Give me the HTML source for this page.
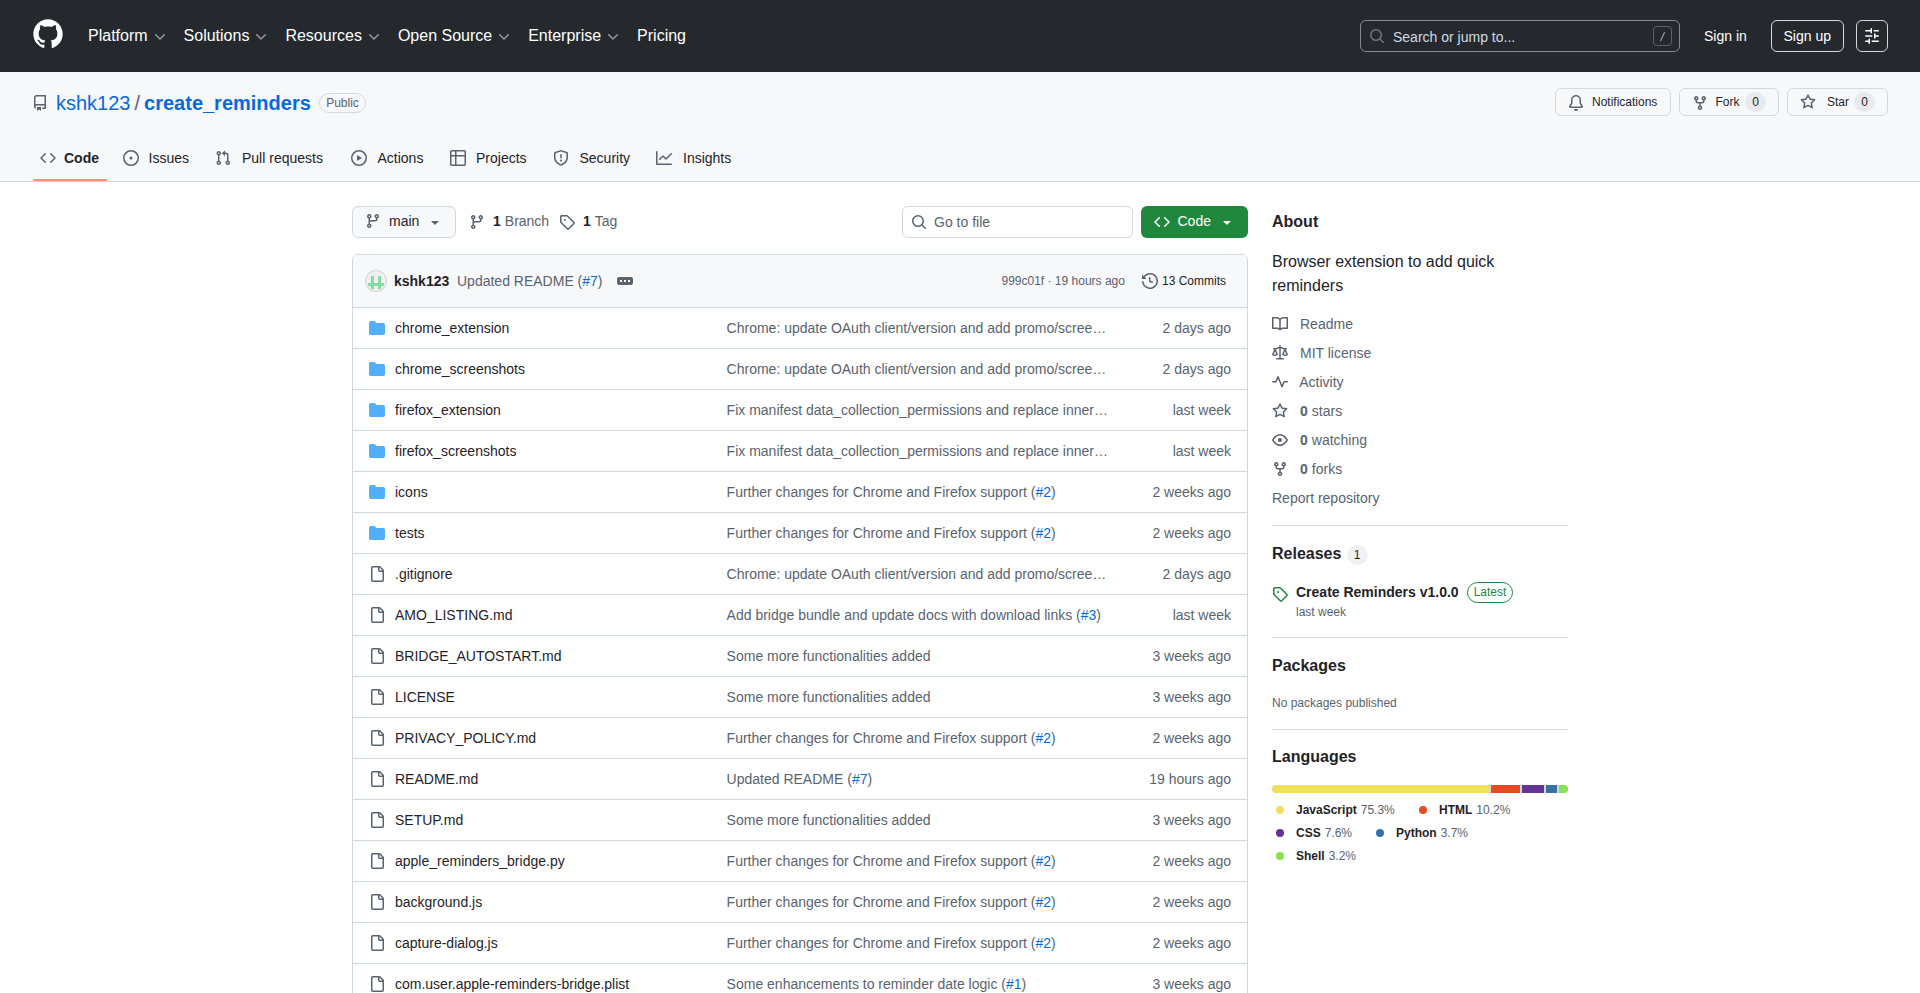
<!DOCTYPE html><html><head><meta charset="utf-8"><title>GitHub</title><style>
*{box-sizing:border-box;margin:0;padding:0}
html,body{width:1920px;height:993px;overflow:hidden;background:#fff}
body{font-family:"Liberation Sans",sans-serif;color:#1f2328;font-size:14px;line-height:1.5;position:relative}
svg{display:block;fill:currentColor;flex-shrink:0}
.a{position:absolute;white-space:nowrap}
.hdr{position:absolute;left:0;top:0;width:1920px;height:72px;background:#25292e}
.gn{position:absolute;left:88px;top:20px;height:32px;display:flex;align-items:center;color:#fff;font-size:16px;white-space:nowrap}
.gn .it{display:flex;align-items:center;margin-right:16px}
.gn .it svg{margin-left:4px;color:#9198a1;position:relative;top:1px}
.srch{position:absolute;left:1360px;top:20px;width:320px;height:32px;border:1px solid #818b98;border-radius:6px;color:#9198a1}
.btnd{position:absolute;top:20px;height:32px;border:1px solid #d1d9e0;border-radius:6px;color:#fff}
.rh{position:absolute;left:0;top:72px;width:1920px;height:110px;background:#f6f8fa;border-bottom:1px solid #d1d9e0}
.btn{position:absolute;height:28px;border:1px solid #d1d9e0;border-radius:6px;background:#f6f8fa;font-size:12px;color:#1f2328;white-space:nowrap}
.cnt{position:absolute;height:20px;line-height:20px;border-radius:2em;background:#818b981f;text-align:center;font-size:12px;color:#1f2328}
.ti{position:absolute;top:150px;color:#59636e}
.tt{position:absolute;top:148px;line-height:20px;color:#1f2328;white-space:nowrap}
.row{position:absolute;left:353px;width:894px;height:41px;border-top:1px solid #d1d9e0;white-space:nowrap}
.row .ic{position:absolute;left:16px;top:12px}
.row .nm{position:absolute;left:42px;top:10px;color:#1f2328}
.row .msg{position:absolute;left:373.6px;top:10px;color:#59636e}
.row .dt{position:absolute;right:16px;top:10px;color:#59636e;text-align:right}
.blue{color:#0969da}
.sb{position:absolute;left:1272px;width:296px}
.li{position:absolute;left:1272px;height:20px;display:flex;align-items:center;color:#59636e;white-space:nowrap}
.li svg{margin-right:12px}
.sep{position:absolute;left:1272px;width:296px;height:1px;background:#d1d9e0}
.h2{position:absolute;left:1272px;font-size:16px;font-weight:700;color:#1f2328;white-space:nowrap}
.lg{position:absolute;display:flex;align-items:center;font-size:12px;color:#59636e;white-space:nowrap}
.lg b{color:#1f2328;margin-right:4px}
.lg i{display:inline-block;width:8px;height:8px;border-radius:50%;margin-right:12px}
</style></head><body>
<div class="hdr">
<svg class="" style="position:absolute;left:32px;top:18px;color:#fff" width="32" height="32" viewBox="0 0 24 24"><path d="M12 1C5.923 1 1 5.923 1 12c0 4.867 3.149 8.979 7.521 10.436.55.096.756-.233.756-.522 0-.262-.013-1.128-.013-2.049-2.764.509-3.479-.674-3.699-1.292-.124-.317-.66-1.293-1.127-1.554-.385-.207-.936-.715-.014-.729.866-.014 1.485.797 1.691 1.128.99 1.663 2.571 1.196 3.204.907.096-.715.385-1.196.701-1.471-2.448-.275-5.005-1.224-5.005-5.432 0-1.196.426-2.186 1.128-2.956-.111-.275-.496-1.402.11-2.915 0 0 .921-.288 3.024 1.128.88-.248 1.816-.371 2.749-.371.934 0 1.871.123 2.75.371 2.104-1.428 3.025-1.128 3.025-1.128.605 1.513.221 2.64.111 2.915.701.77 1.127 1.747 1.127 2.956 0 4.222-2.571 5.157-5.019 5.432.399.344.743 1.004.743 2.035 0 1.471-.014 2.654-.014 3.025 0 .289.206.632.756.522C19.851 20.979 23 16.854 23 12c0-6.077-4.922-11-11-11Z"/></svg>
<div class="gn">
<div class="it">Platform<svg class="" style="" width="16" height="16" viewBox="0 0 16 16"><path d="M12.78 5.22a.749.749 0 0 1 0 1.06l-4.25 4.25a.749.749 0 0 1-1.06 0L3.22 6.28a.749.749 0 0 1 .215-1.215.749.749 0 0 1 .845.155L8 8.94l3.72-3.72a.749.749 0 0 1 1.06 0Z"/></svg></div>
<div class="it">Solutions<svg class="" style="" width="16" height="16" viewBox="0 0 16 16"><path d="M12.78 5.22a.749.749 0 0 1 0 1.06l-4.25 4.25a.749.749 0 0 1-1.06 0L3.22 6.28a.749.749 0 0 1 .215-1.215.749.749 0 0 1 .845.155L8 8.94l3.72-3.72a.749.749 0 0 1 1.06 0Z"/></svg></div>
<div class="it">Resources<svg class="" style="" width="16" height="16" viewBox="0 0 16 16"><path d="M12.78 5.22a.749.749 0 0 1 0 1.06l-4.25 4.25a.749.749 0 0 1-1.06 0L3.22 6.28a.749.749 0 0 1 .215-1.215.749.749 0 0 1 .845.155L8 8.94l3.72-3.72a.749.749 0 0 1 1.06 0Z"/></svg></div>
<div class="it">Open Source<svg class="" style="" width="16" height="16" viewBox="0 0 16 16"><path d="M12.78 5.22a.749.749 0 0 1 0 1.06l-4.25 4.25a.749.749 0 0 1-1.06 0L3.22 6.28a.749.749 0 0 1 .215-1.215.749.749 0 0 1 .845.155L8 8.94l3.72-3.72a.749.749 0 0 1 1.06 0Z"/></svg></div>
<div class="it">Enterprise<svg class="" style="" width="16" height="16" viewBox="0 0 16 16"><path d="M12.78 5.22a.749.749 0 0 1 0 1.06l-4.25 4.25a.749.749 0 0 1-1.06 0L3.22 6.28a.749.749 0 0 1 .215-1.215.749.749 0 0 1 .845.155L8 8.94l3.72-3.72a.749.749 0 0 1 1.06 0Z"/></svg></div>
<div class="it">Pricing</div>
</div>
<div class="srch"><svg class="" style="position:absolute;left:8px;top:7px;color:#6e7781" width="16" height="16" viewBox="0 0 16 16"><path d="M10.68 11.74a6 6 0 0 1-7.922-8.982 6 6 0 0 1 8.982 7.922l3.04 3.04a.749.749 0 0 1-.326 1.275.749.749 0 0 1-.734-.215ZM11.5 7a4.499 4.499 0 1 0-8.997 0A4.499 4.499 0 0 0 11.5 7Z"/></svg><span class="a" style="left:32px;top:6px;font-size:14px;line-height:20px;color:#d1d9e0">Search or jump to...</span><span class="a" style="left:292px;top:5px;width:19px;height:20px;border:1px solid #5c6167;border-radius:4px"></span><svg class="a" style="left:0;top:0" width="320" height="32"><line x1="299.6" y1="19.8" x2="303.4" y2="11.6" stroke="#9da3ab" stroke-width="1.1" stroke-linecap="round"/></svg></div>
<span class="a" style="left:1704px;top:26px;font-size:14px;line-height:20px;color:#fff">Sign in</span>
<div class="btnd" style="left:1771px;width:73px"><span class="a" style="left:11.5px;top:5px;font-size:14px;line-height:20px">Sign up</span></div>
<div class="btnd" style="left:1856px;width:32px"><svg class="" style="position:absolute;left:7px;top:7px" width="16" height="16" viewBox="0 0 16 16"><path d="M15 2.75a.75.75 0 0 1-.75.75h-4a.75.75 0 0 1 0-1.5h4a.75.75 0 0 1 .75.75Zm-8.5.75v1.25a.75.75 0 0 0 1.5 0v-4a.75.75 0 0 0-1.5 0V2H1.75a.75.75 0 0 0 0 1.5H6.5Zm1.25 5.25a.75.75 0 0 0 0-1.5h-6a.75.75 0 0 0 0 1.5h6ZM15 8a.75.75 0 0 1-.75.75H11.5V10a.75.75 0 1 1-1.5 0V6a.75.75 0 0 1 1.5 0v1.25h2.75A.75.75 0 0 1 15 8Zm-9 5.25v-2a.75.75 0 0 0-1.5 0v1.25H1.75a.75.75 0 0 0 0 1.5H4.5v1.25a.75.75 0 0 0 1.5 0v-2Zm9 0a.75.75 0 0 1-.75.75h-6a.75.75 0 0 1 0-1.5h6a.75.75 0 0 1 .75.75Z"/></svg></div>
</div>
<div class="rh"></div>
<svg class="" style="position:absolute;left:32px;top:95px;color:#59636e" width="16" height="16" viewBox="0 0 16 16"><path d="M2 2.5A2.5 2.5 0 0 1 4.5 0h8.75a.75.75 0 0 1 .75.75v12.5a.75.75 0 0 1-.75.75h-2.5a.75.75 0 0 1 0-1.5h1.75v-2h-8a1 1 0 0 0-.714 1.7.75.75 0 1 1-1.072 1.05A2.495 2.495 0 0 1 2 11.5Zm10.5-1h-8a1 1 0 0 0-1 1v6.708A2.486 2.486 0 0 1 4.5 9h8ZM5 12.25a.25.25 0 0 1 .25-.25h3.5a.25.25 0 0 1 .25.25v3.25a.25.25 0 0 1-.4.2l-1.45-1.087a.249.249 0 0 0-.3 0L5.4 15.7a.25.25 0 0 1-.4-.2Z"/></svg>
<span class="a" style="left:56px;top:91px;font-size:20px;line-height:24px"><span class="blue">kshk123</span><span style="color:#59636e;margin:0 4px">/</span><b class="blue">create_reminders</b></span>
<span class="a" style="left:319px;top:93px;width:47px;height:20px;border:1px solid #d1d9e0;border-radius:2em;font-size:12px;line-height:18px;color:#59636e;text-align:center">Public</span>
<div class="btn" style="left:1555px;top:88px;width:116px"></div><svg class="" style="position:absolute;left:1568px;top:95px;color:#59636e" width="16" height="16" viewBox="0 0 16 16"><path d="M8 16a2 2 0 0 0 1.985-1.75c.017-.137-.097-.25-.235-.25h-3.5c-.138 0-.252.113-.235.25A2 2 0 0 0 8 16ZM3 5a5 5 0 0 1 10 0v2.947c0 .05.015.098.042.139l1.703 2.555A1.519 1.519 0 0 1 13.482 13H2.518a1.516 1.516 0 0 1-1.263-2.36l1.703-2.554A.255.255 0 0 0 3 7.947Zm5-3.5A3.5 3.5 0 0 0 4.5 5v2.947c0 .346-.102.683-.294.97l-1.703 2.556a.017.017 0 0 0-.003.01l.001.006c0 .002.002.004.004.006l.006.004.007.001h10.964l.007-.001.006-.004.004-.006.001-.007a.017.017 0 0 0-.003-.01l-1.703-2.554a1.745 1.745 0 0 1-.294-.97V5A3.5 3.5 0 0 0 8 1.5Z"/></svg><span class="a" style="left:1592px;top:93px;font-size:12px;line-height:18px">Notifications</span>
<div class="btn" style="left:1679px;top:88px;width:100px"></div><svg class="" style="position:absolute;left:1692px;top:95px;color:#59636e" width="16" height="16" viewBox="0 0 16 16"><path d="M5 5.372v.878c0 .414.336.75.75.75h4.5a.75.75 0 0 0 .75-.75v-.878a2.25 2.25 0 1 1 1.5 0v.878a2.25 2.25 0 0 1-2.25 2.25h-1.5v2.128a2.251 2.251 0 1 1-1.5 0V8.5h-1.5A2.25 2.25 0 0 1 3.5 6.25v-.878a2.25 2.25 0 1 1 1.5 0ZM5 3.25a.75.75 0 1 0-1.5 0 .75.75 0 0 0 1.5 0Zm6.75.75a.75.75 0 1 0 0-1.5.75.75 0 0 0 0 1.5Zm-3 8.75a.75.75 0 1 0-1.5 0 .75.75 0 0 0 1.5 0Z"/></svg><span class="a" style="left:1715.5px;top:93px;font-size:12px;line-height:18px">Fork</span><span class="cnt" style="left:1745px;top:92px;width:21px">0</span>
<div class="btn" style="left:1787px;top:88px;width:101px"></div><svg class="" style="position:absolute;left:1800px;top:93.5px;color:#59636e" width="16" height="16" viewBox="0 0 16 16"><path d="M8 .25a.75.75 0 0 1 .673.418l1.882 3.815 4.21.612a.75.75 0 0 1 .416 1.279l-3.046 2.97.719 4.192a.751.751 0 0 1-1.088.791L8 12.347l-3.766 1.98a.75.75 0 0 1-1.088-.79l.72-4.194L.818 6.374a.75.75 0 0 1 .416-1.28l4.21-.611L7.327.668A.75.75 0 0 1 8 .25Zm0 2.445L6.615 5.5a.75.75 0 0 1-.564.41l-3.097.45 2.24 2.184a.75.75 0 0 1 .216.664l-.528 3.084 2.769-1.456a.75.75 0 0 1 .698 0l2.77 1.456-.53-3.084a.75.75 0 0 1 .216-.664l2.24-2.183-3.096-.45a.75.75 0 0 1-.564-.41L8 2.694Z"/></svg><span class="a" style="left:1827px;top:93px;font-size:12px;line-height:18px">Star</span><span class="cnt" style="left:1854px;top:92px;width:21px">0</span>
<svg class="ti" style="left:40px" width="16" height="16" viewBox="0 0 16 16"><path d="m11.28 3.22 4.25 4.25a.75.75 0 0 1 0 1.06l-4.25 4.25a.749.749 0 0 1-1.275-.326.749.749 0 0 1 .215-.734L13.94 8l-3.72-3.72a.749.749 0 0 1 .326-1.275.749.749 0 0 1 .734.215Zm-6.56 0a.751.751 0 0 1 1.042.018.751.751 0 0 1 .018 1.042L2.06 8l3.72 3.72a.749.749 0 0 1-.326 1.275.749.749 0 0 1-.734-.215L.47 8.53a.75.75 0 0 1 0-1.06Z"/></svg>
<span class="tt" style="left:64px"><b>Code</b></span>
<svg class="ti" style="left:123px" width="16" height="16" viewBox="0 0 16 16"><path d="M8 9.5a1.5 1.5 0 1 0 0-3 1.5 1.5 0 0 0 0 3ZM8 0a8 8 0 1 1 0 16A8 8 0 0 1 8 0ZM1.5 8a6.5 6.5 0 1 0 13 0 6.5 6.5 0 0 0-13 0Z"/></svg>
<span class="tt" style="left:148.5px">Issues</span>
<svg class="ti" style="left:215px" width="16" height="16" viewBox="0 0 16 16"><path d="M1.5 3.25a2.25 2.25 0 1 1 3 2.122v5.256a2.251 2.251 0 1 1-1.5 0V5.372A2.25 2.25 0 0 1 1.5 3.25Zm5.677-.177L9.573.677A.25.25 0 0 1 10 .854V2.5h1A2.5 2.5 0 0 1 13.5 5v5.628a2.251 2.251 0 1 1-1.5 0V5a1 1 0 0 0-1-1h-1v1.646a.25.25 0 0 1-.427.177L7.177 3.427a.25.25 0 0 1 0-.354ZM3.75 2.5a.75.75 0 1 0 0 1.5.75.75 0 0 0 0-1.5Zm0 9.5a.75.75 0 1 0 0 1.5.75.75 0 0 0 0-1.5Zm8.25.75a.75.75 0 1 0 1.5 0 .75.75 0 0 0-1.5 0Z"/></svg>
<span class="tt" style="left:242px">Pull requests</span>
<svg class="ti" style="left:351px" width="16" height="16" viewBox="0 0 16 16"><path d="M8 0a8 8 0 1 1 0 16A8 8 0 0 1 8 0ZM1.5 8a6.5 6.5 0 1 0 13 0 6.5 6.5 0 0 0-13 0Zm4.879-2.773 4.264 2.559a.25.25 0 0 1 0 .428l-4.264 2.559A.25.25 0 0 1 6 10.559V5.442a.25.25 0 0 1 .379-.215Z"/></svg>
<span class="tt" style="left:377.5px">Actions</span>
<svg class="ti" style="left:450px" width="16" height="16" viewBox="0 0 16 16"><path d="M0 1.75C0 .784.784 0 1.75 0h12.5C15.216 0 16 .784 16 1.75v12.5A1.75 1.75 0 0 1 14.25 16H1.75A1.75 1.75 0 0 1 0 14.25ZM6.5 6.5v8h7.75a.25.25 0 0 0 .25-.25V6.5Zm8-1.5V1.75a.25.25 0 0 0-.25-.25H6.5V5Zm-13 1.5v7.75c0 .138.112.25.25.25H5v-8ZM5 5V1.5H1.75a.25.25 0 0 0-.25.25V5Z"/></svg>
<span class="tt" style="left:476px">Projects</span>
<svg class="ti" style="left:553px" width="16" height="16" viewBox="0 0 16 16"><path d="M7.467.133a1.748 1.748 0 0 1 1.066 0l5.25 1.68A1.75 1.75 0 0 1 15 3.48V7c0 1.566-.32 3.182-1.303 4.682-.983 1.498-2.585 2.813-5.032 3.855a1.697 1.697 0 0 1-1.33 0c-2.447-1.042-4.049-2.357-5.032-3.855C1.32 10.182 1 8.566 1 7V3.48a1.755 1.755 0 0 1 1.217-1.667Zm.61 1.429a.25.25 0 0 0-.153 0l-5.25 1.68a.25.25 0 0 0-.174.238V7c0 1.358.275 2.666 1.057 3.86.784 1.194 2.121 2.34 4.366 3.297a.196.196 0 0 0 .154 0c2.245-.956 3.582-2.104 4.366-3.298C13.225 9.666 13.5 8.36 13.5 7V3.48a.251.251 0 0 0-.174-.237l-5.25-1.68ZM8.75 4.75v3a.75.75 0 0 1-1.5 0v-3a.75.75 0 0 1 1.5 0ZM9 10.5a1 1 0 1 1-2 0 1 1 0 0 1 2 0Z"/></svg>
<span class="tt" style="left:579.5px">Security</span>
<svg class="ti" style="left:656px" width="16" height="16" viewBox="0 0 16 16"><path d="M1.5 1.75V13.5h13.75a.75.75 0 0 1 0 1.5H.75a.75.75 0 0 1-.75-.75V1.75a.75.75 0 0 1 1.5 0Zm14.28 2.53-5.25 5.25a.75.75 0 0 1-1.06 0L7 7.06 4.28 9.78a.751.751 0 0 1-1.042-.018.751.751 0 0 1-.018-1.042l3.25-3.25a.75.75 0 0 1 1.06 0L10 7.940l4.72-4.72a.751.751 0 0 1 1.042.018.751.751 0 0 1 .018 1.042Z"/></svg>
<span class="tt" style="left:683px">Insights</span>
<div class="a" style="left:33px;top:179px;width:74px;height:2px;background:#fd8c73;border-radius:6px"></div>
<div class="btn" style="left:352px;top:206px;width:104px;height:32px"></div><svg class="" style="position:absolute;left:365px;top:213.2px;color:#59636e" width="16" height="16" viewBox="0 0 16 16"><path d="M9.5 3.25a2.25 2.25 0 1 1 3 2.122V6A2.5 2.5 0 0 1 10 8.5H6a1 1 0 0 0-1 1v1.128a2.251 2.251 0 1 1-1.5 0V5.372a2.25 2.25 0 1 1 1.5 0v1.836A2.493 2.493 0 0 1 6 7h4a1 1 0 0 0 1-1v-.628A2.25 2.25 0 0 1 9.5 3.25Zm-6 0a.75.75 0 1 0 1.5 0 .75.75 0 0 0-1.5 0Zm8.25-.75a.75.75 0 1 0 0 1.5.75.75 0 0 0 0-1.5ZM4.25 12a.75.75 0 1 0 0 1.5.75.75 0 0 0 0-1.5Z"/></svg><span class="a" style="left:389px;top:211px;line-height:20px;font-size:14px">main</span><svg class="" style="position:absolute;left:427px;top:214px;color:#59636e" width="16" height="16" viewBox="0 0 16 16"><path d="m4.427 7.427 3.396 3.396a.25.25 0 0 0 .354 0l3.396-3.396A.25.25 0 0 0 11.396 7H4.604a.25.25 0 0 0-.177.427Z"/></svg>
<div class="a" style="left:469px;top:205px;height:32px;display:flex;align-items:center;color:#59636e"><svg class="" style="margin-right:8px;position:relative;top:0.8px" width="16" height="16" viewBox="0 0 16 16"><path d="M9.5 3.25a2.25 2.25 0 1 1 3 2.122V6A2.5 2.5 0 0 1 10 8.5H6a1 1 0 0 0-1 1v1.128a2.251 2.251 0 1 1-1.5 0V5.372a2.25 2.25 0 1 1 1.5 0v1.836A2.493 2.493 0 0 1 6 7h4a1 1 0 0 0 1-1v-.628A2.25 2.25 0 0 1 9.5 3.25Zm-6 0a.75.75 0 1 0 1.5 0 .75.75 0 0 0-1.5 0Zm8.25-.75a.75.75 0 1 0 0 1.5.75.75 0 0 0 0-1.5ZM4.25 12a.75.75 0 1 0 0 1.5.75.75 0 0 0 0-1.5Z"/></svg><b style="color:#1f2328;margin-right:4px">1</b>Branch</div>
<div class="a" style="left:559px;top:205px;height:32px;display:flex;align-items:center;color:#59636e"><svg class="" style="margin-right:8px;position:relative;top:1px" width="16" height="16" viewBox="0 0 16 16"><path d="M1 7.775V2.75C1 1.784 1.784 1 2.75 1h5.025c.464 0 .91.184 1.238.513l6.25 6.25a1.75 1.75 0 0 1 0 2.474l-5.026 5.026a1.75 1.75 0 0 1-2.474 0l-6.25-6.25A1.752 1.752 0 0 1 1 7.775Zm1.5 0c0 .066.026.13.073.177l6.25 6.25a.25.25 0 0 0 .354 0l5.025-5.025a.25.25 0 0 0 0-.354l-6.25-6.25a.25.25 0 0 0-.177-.073H2.75a.25.25 0 0 0-.25.25ZM6 5a1 1 0 1 1 0 2 1 1 0 0 1 0-2Z"/></svg><b style="color:#1f2328;margin-right:4px">1</b>Tag</div>
<div class="a" style="left:902px;top:206px;width:231px;height:32px;border:1px solid #d1d9e0;border-radius:6px;background:#fff"><svg class="" style="position:absolute;left:8px;top:7px;color:#59636e" width="16" height="16" viewBox="0 0 16 16"><path d="M10.68 11.74a6 6 0 0 1-7.922-8.982 6 6 0 0 1 8.982 7.922l3.04 3.04a.749.749 0 0 1-.326 1.275.749.749 0 0 1-.734-.215ZM11.5 7a4.499 4.499 0 1 0-8.997 0A4.499 4.499 0 0 0 11.5 7Z"/></svg><span class="a" style="left:31px;top:5px;line-height:20px;color:#59636e">Go to file</span></div>
<div class="a" style="left:1141px;top:206px;width:107px;height:32px;border-radius:6px;background:#1f883d;color:#fff"><svg class="" style="position:absolute;left:13px;top:8px" width="16" height="16" viewBox="0 0 16 16"><path d="m11.28 3.22 4.25 4.25a.75.75 0 0 1 0 1.06l-4.25 4.25a.749.749 0 0 1-1.275-.326.749.749 0 0 1 .215-.734L13.94 8l-3.72-3.72a.749.749 0 0 1 .326-1.275.749.749 0 0 1 .734.215Zm-6.56 0a.751.751 0 0 1 1.042.018.751.751 0 0 1 .018 1.042L2.06 8l3.72 3.72a.749.749 0 0 1-.326 1.275.749.749 0 0 1-.734-.215L.47 8.53a.75.75 0 0 1 0-1.06Z"/></svg><span class="a" style="left:36.5px;top:5px;line-height:20px">Code</span><svg class="" style="position:absolute;left:78px;top:8px" width="16" height="16" viewBox="0 0 16 16"><path d="m4.427 7.427 3.396 3.396a.25.25 0 0 0 .354 0l3.396-3.396A.25.25 0 0 0 11.396 7H4.604a.25.25 0 0 0-.177.427Z"/></svg></div>
<div class="a" style="left:352px;top:254px;width:896px;height:800px;border:1px solid #d1d9e0;border-radius:6px;overflow:hidden">
<div class="a" style="left:0;top:0;width:894px;height:53px;background:#f6f8fa"></div>
</div>
<div class="a" style="left:366px;top:271px;width:20px;height:20px;border-radius:50%;background:#f0f0f0;box-shadow:0 0 0 1px #d6d7da;overflow:hidden"><i class="a" style="left:5px;top:5px;width:3.33px;height:13.33px;background:#86d9a0"></i><i class="a" style="left:11.67px;top:5px;width:3.33px;height:13.33px;background:#86d9a0"></i><i class="a" style="left:1.67px;top:11.67px;width:16.67px;height:3.33px;background:#86d9a0"></i></div>
<b class="a" style="left:394px;top:271px;line-height:20px">kshk123</b>
<span class="a" style="left:457px;top:271px;line-height:20px;color:#59636e">Updated README (<span class="blue">#7</span>)</span>
<div class="a" style="left:617px;top:277px;width:16px;height:8px;border-radius:2px;background:#59636e;box-shadow:0 0 0 1px #fff"><i class="a" style="left:3px;top:3px;width:2px;height:2px;background:#eef0f2"></i><i class="a" style="left:7px;top:3px;width:2px;height:2px;background:#f6f8fa"></i><i class="a" style="left:11px;top:3px;width:2px;height:2px;background:#f6f8fa"></i></div>
<span class="a" style="left:1001.5px;top:272px;font-size:12px;line-height:18px;color:#59636e">999c01f · 19 hours ago</span>
<svg class="" style="position:absolute;left:1142px;top:273px;color:#59636e" width="16" height="16" viewBox="0 0 16 16"><path d="m.427 1.927 1.215 1.215a8.002 8.002 0 1 1-1.6 5.685.75.75 0 1 1 1.493-.154 6.5 6.5 0 1 0 1.18-4.458l1.358 1.358A.25.25 0 0 1 3.896 6H.25A.25.25 0 0 1 0 5.75V2.104a.25.25 0 0 1 .427-.177ZM7.75 4a.75.75 0 0 1 .75.75v2.992l2.028.812a.75.75 0 0 1-.557 1.392l-2.5-1A.751.751 0 0 1 7 8.25v-3.5A.75.75 0 0 1 7.75 4Z"/></svg>
<span class="a" style="left:1162px;top:272px;font-size:12px;line-height:18px;color:#1f2328">13 Commits</span>
<div class="row" style="top:307px"><svg class="ic" style="color:#54aeff" width="16" height="16" viewBox="0 0 16 16"><path d="M1.75 1A1.75 1.75 0 0 0 0 2.75v10.5C0 14.216.784 15 1.75 15h12.5A1.75 1.75 0 0 0 16 13.25v-8.5A1.75 1.75 0 0 0 14.25 3H7.5a.25.25 0 0 1-.2-.1l-.9-1.2C6.07 1.26 5.55 1 5 1H1.75Z"/></svg><span class="nm">chrome_extension</span><span class="msg">Chrome: update OAuth client/version and add promo/scree…</span><span class="dt">2 days ago</span></div>
<div class="row" style="top:348px"><svg class="ic" style="color:#54aeff" width="16" height="16" viewBox="0 0 16 16"><path d="M1.75 1A1.75 1.75 0 0 0 0 2.75v10.5C0 14.216.784 15 1.75 15h12.5A1.75 1.75 0 0 0 16 13.25v-8.5A1.75 1.75 0 0 0 14.25 3H7.5a.25.25 0 0 1-.2-.1l-.9-1.2C6.07 1.26 5.55 1 5 1H1.75Z"/></svg><span class="nm">chrome_screenshots</span><span class="msg">Chrome: update OAuth client/version and add promo/scree…</span><span class="dt">2 days ago</span></div>
<div class="row" style="top:389px"><svg class="ic" style="color:#54aeff" width="16" height="16" viewBox="0 0 16 16"><path d="M1.75 1A1.75 1.75 0 0 0 0 2.75v10.5C0 14.216.784 15 1.75 15h12.5A1.75 1.75 0 0 0 16 13.25v-8.5A1.75 1.75 0 0 0 14.25 3H7.5a.25.25 0 0 1-.2-.1l-.9-1.2C6.07 1.26 5.55 1 5 1H1.75Z"/></svg><span class="nm">firefox_extension</span><span class="msg">Fix manifest data_collection_permissions and replace inner…</span><span class="dt">last week</span></div>
<div class="row" style="top:430px"><svg class="ic" style="color:#54aeff" width="16" height="16" viewBox="0 0 16 16"><path d="M1.75 1A1.75 1.75 0 0 0 0 2.75v10.5C0 14.216.784 15 1.75 15h12.5A1.75 1.75 0 0 0 16 13.25v-8.5A1.75 1.75 0 0 0 14.25 3H7.5a.25.25 0 0 1-.2-.1l-.9-1.2C6.07 1.26 5.55 1 5 1H1.75Z"/></svg><span class="nm">firefox_screenshots</span><span class="msg">Fix manifest data_collection_permissions and replace inner…</span><span class="dt">last week</span></div>
<div class="row" style="top:471px"><svg class="ic" style="color:#54aeff" width="16" height="16" viewBox="0 0 16 16"><path d="M1.75 1A1.75 1.75 0 0 0 0 2.75v10.5C0 14.216.784 15 1.75 15h12.5A1.75 1.75 0 0 0 16 13.25v-8.5A1.75 1.75 0 0 0 14.25 3H7.5a.25.25 0 0 1-.2-.1l-.9-1.2C6.07 1.26 5.55 1 5 1H1.75Z"/></svg><span class="nm">icons</span><span class="msg">Further changes for Chrome and Firefox support (<span class="blue">#2</span>)</span><span class="dt">2 weeks ago</span></div>
<div class="row" style="top:512px"><svg class="ic" style="color:#54aeff" width="16" height="16" viewBox="0 0 16 16"><path d="M1.75 1A1.75 1.75 0 0 0 0 2.75v10.5C0 14.216.784 15 1.75 15h12.5A1.75 1.75 0 0 0 16 13.25v-8.5A1.75 1.75 0 0 0 14.25 3H7.5a.25.25 0 0 1-.2-.1l-.9-1.2C6.07 1.26 5.55 1 5 1H1.75Z"/></svg><span class="nm">tests</span><span class="msg">Further changes for Chrome and Firefox support (<span class="blue">#2</span>)</span><span class="dt">2 weeks ago</span></div>
<div class="row" style="top:553px"><svg class="ic" style="color:#59636e" width="16" height="16" viewBox="0 0 16 16"><path d="M2 1.75C2 .784 2.784 0 3.75 0h6.586c.464 0 .909.184 1.237.513l2.914 2.914c.329.328.513.773.513 1.237v9.586A1.75 1.75 0 0 1 13.25 16h-9.5A1.75 1.75 0 0 1 2 14.25Zm1.75-.25a.25.25 0 0 0-.25.25v12.5c0 .138.112.25.25.25h9.5a.25.25 0 0 0 .25-.25V6h-2.75A1.75 1.75 0 0 1 9 4.25V1.5Zm6.75.062V4.25c0 .138.112.25.25.25h2.688l-.011-.013-2.914-2.914-.013-.011Z"/></svg><span class="nm">.gitignore</span><span class="msg">Chrome: update OAuth client/version and add promo/scree…</span><span class="dt">2 days ago</span></div>
<div class="row" style="top:594px"><svg class="ic" style="color:#59636e" width="16" height="16" viewBox="0 0 16 16"><path d="M2 1.75C2 .784 2.784 0 3.75 0h6.586c.464 0 .909.184 1.237.513l2.914 2.914c.329.328.513.773.513 1.237v9.586A1.75 1.75 0 0 1 13.25 16h-9.5A1.75 1.75 0 0 1 2 14.25Zm1.75-.25a.25.25 0 0 0-.25.25v12.5c0 .138.112.25.25.25h9.5a.25.25 0 0 0 .25-.25V6h-2.75A1.75 1.75 0 0 1 9 4.25V1.5Zm6.75.062V4.25c0 .138.112.25.25.25h2.688l-.011-.013-2.914-2.914-.013-.011Z"/></svg><span class="nm">AMO_LISTING.md</span><span class="msg">Add bridge bundle and update docs with download links (<span class="blue">#3</span>)</span><span class="dt">last week</span></div>
<div class="row" style="top:635px"><svg class="ic" style="color:#59636e" width="16" height="16" viewBox="0 0 16 16"><path d="M2 1.75C2 .784 2.784 0 3.75 0h6.586c.464 0 .909.184 1.237.513l2.914 2.914c.329.328.513.773.513 1.237v9.586A1.75 1.75 0 0 1 13.25 16h-9.5A1.75 1.75 0 0 1 2 14.25Zm1.75-.25a.25.25 0 0 0-.25.25v12.5c0 .138.112.25.25.25h9.5a.25.25 0 0 0 .25-.25V6h-2.75A1.75 1.75 0 0 1 9 4.25V1.5Zm6.75.062V4.25c0 .138.112.25.25.25h2.688l-.011-.013-2.914-2.914-.013-.011Z"/></svg><span class="nm">BRIDGE_AUTOSTART.md</span><span class="msg">Some more functionalities added</span><span class="dt">3 weeks ago</span></div>
<div class="row" style="top:676px"><svg class="ic" style="color:#59636e" width="16" height="16" viewBox="0 0 16 16"><path d="M2 1.75C2 .784 2.784 0 3.75 0h6.586c.464 0 .909.184 1.237.513l2.914 2.914c.329.328.513.773.513 1.237v9.586A1.75 1.75 0 0 1 13.25 16h-9.5A1.75 1.75 0 0 1 2 14.25Zm1.75-.25a.25.25 0 0 0-.25.25v12.5c0 .138.112.25.25.25h9.5a.25.25 0 0 0 .25-.25V6h-2.75A1.75 1.75 0 0 1 9 4.25V1.5Zm6.75.062V4.25c0 .138.112.25.25.25h2.688l-.011-.013-2.914-2.914-.013-.011Z"/></svg><span class="nm">LICENSE</span><span class="msg">Some more functionalities added</span><span class="dt">3 weeks ago</span></div>
<div class="row" style="top:717px"><svg class="ic" style="color:#59636e" width="16" height="16" viewBox="0 0 16 16"><path d="M2 1.75C2 .784 2.784 0 3.75 0h6.586c.464 0 .909.184 1.237.513l2.914 2.914c.329.328.513.773.513 1.237v9.586A1.75 1.75 0 0 1 13.25 16h-9.5A1.75 1.75 0 0 1 2 14.25Zm1.75-.25a.25.25 0 0 0-.25.25v12.5c0 .138.112.25.25.25h9.5a.25.25 0 0 0 .25-.25V6h-2.75A1.75 1.75 0 0 1 9 4.25V1.5Zm6.75.062V4.25c0 .138.112.25.25.25h2.688l-.011-.013-2.914-2.914-.013-.011Z"/></svg><span class="nm">PRIVACY_POLICY.md</span><span class="msg">Further changes for Chrome and Firefox support (<span class="blue">#2</span>)</span><span class="dt">2 weeks ago</span></div>
<div class="row" style="top:758px"><svg class="ic" style="color:#59636e" width="16" height="16" viewBox="0 0 16 16"><path d="M2 1.75C2 .784 2.784 0 3.75 0h6.586c.464 0 .909.184 1.237.513l2.914 2.914c.329.328.513.773.513 1.237v9.586A1.75 1.75 0 0 1 13.25 16h-9.5A1.75 1.75 0 0 1 2 14.25Zm1.75-.25a.25.25 0 0 0-.25.25v12.5c0 .138.112.25.25.25h9.5a.25.25 0 0 0 .25-.25V6h-2.75A1.75 1.75 0 0 1 9 4.25V1.5Zm6.75.062V4.25c0 .138.112.25.25.25h2.688l-.011-.013-2.914-2.914-.013-.011Z"/></svg><span class="nm">README.md</span><span class="msg">Updated README (<span class="blue">#7</span>)</span><span class="dt">19 hours ago</span></div>
<div class="row" style="top:799px"><svg class="ic" style="color:#59636e" width="16" height="16" viewBox="0 0 16 16"><path d="M2 1.75C2 .784 2.784 0 3.75 0h6.586c.464 0 .909.184 1.237.513l2.914 2.914c.329.328.513.773.513 1.237v9.586A1.75 1.75 0 0 1 13.25 16h-9.5A1.75 1.75 0 0 1 2 14.25Zm1.75-.25a.25.25 0 0 0-.25.25v12.5c0 .138.112.25.25.25h9.5a.25.25 0 0 0 .25-.25V6h-2.75A1.75 1.75 0 0 1 9 4.25V1.5Zm6.75.062V4.25c0 .138.112.25.25.25h2.688l-.011-.013-2.914-2.914-.013-.011Z"/></svg><span class="nm">SETUP.md</span><span class="msg">Some more functionalities added</span><span class="dt">3 weeks ago</span></div>
<div class="row" style="top:840px"><svg class="ic" style="color:#59636e" width="16" height="16" viewBox="0 0 16 16"><path d="M2 1.75C2 .784 2.784 0 3.75 0h6.586c.464 0 .909.184 1.237.513l2.914 2.914c.329.328.513.773.513 1.237v9.586A1.75 1.75 0 0 1 13.25 16h-9.5A1.75 1.75 0 0 1 2 14.25Zm1.75-.25a.25.25 0 0 0-.25.25v12.5c0 .138.112.25.25.25h9.5a.25.25 0 0 0 .25-.25V6h-2.75A1.75 1.75 0 0 1 9 4.25V1.5Zm6.75.062V4.25c0 .138.112.25.25.25h2.688l-.011-.013-2.914-2.914-.013-.011Z"/></svg><span class="nm">apple_reminders_bridge.py</span><span class="msg">Further changes for Chrome and Firefox support (<span class="blue">#2</span>)</span><span class="dt">2 weeks ago</span></div>
<div class="row" style="top:881px"><svg class="ic" style="color:#59636e" width="16" height="16" viewBox="0 0 16 16"><path d="M2 1.75C2 .784 2.784 0 3.75 0h6.586c.464 0 .909.184 1.237.513l2.914 2.914c.329.328.513.773.513 1.237v9.586A1.75 1.75 0 0 1 13.25 16h-9.5A1.75 1.75 0 0 1 2 14.25Zm1.75-.25a.25.25 0 0 0-.25.25v12.5c0 .138.112.25.25.25h9.5a.25.25 0 0 0 .25-.25V6h-2.75A1.75 1.75 0 0 1 9 4.25V1.5Zm6.75.062V4.25c0 .138.112.25.25.25h2.688l-.011-.013-2.914-2.914-.013-.011Z"/></svg><span class="nm">background.js</span><span class="msg">Further changes for Chrome and Firefox support (<span class="blue">#2</span>)</span><span class="dt">2 weeks ago</span></div>
<div class="row" style="top:922px"><svg class="ic" style="color:#59636e" width="16" height="16" viewBox="0 0 16 16"><path d="M2 1.75C2 .784 2.784 0 3.75 0h6.586c.464 0 .909.184 1.237.513l2.914 2.914c.329.328.513.773.513 1.237v9.586A1.75 1.75 0 0 1 13.25 16h-9.5A1.75 1.75 0 0 1 2 14.25Zm1.75-.25a.25.25 0 0 0-.25.25v12.5c0 .138.112.25.25.25h9.5a.25.25 0 0 0 .25-.25V6h-2.75A1.75 1.75 0 0 1 9 4.25V1.5Zm6.75.062V4.25c0 .138.112.25.25.25h2.688l-.011-.013-2.914-2.914-.013-.011Z"/></svg><span class="nm">capture-dialog.js</span><span class="msg">Further changes for Chrome and Firefox support (<span class="blue">#2</span>)</span><span class="dt">2 weeks ago</span></div>
<div class="row" style="top:963px"><svg class="ic" style="color:#59636e" width="16" height="16" viewBox="0 0 16 16"><path d="M2 1.75C2 .784 2.784 0 3.75 0h6.586c.464 0 .909.184 1.237.513l2.914 2.914c.329.328.513.773.513 1.237v9.586A1.75 1.75 0 0 1 13.25 16h-9.5A1.75 1.75 0 0 1 2 14.25Zm1.75-.25a.25.25 0 0 0-.25.25v12.5c0 .138.112.25.25.25h9.5a.25.25 0 0 0 .25-.25V6h-2.75A1.75 1.75 0 0 1 9 4.25V1.5Zm6.75.062V4.25c0 .138.112.25.25.25h2.688l-.011-.013-2.914-2.914-.013-.011Z"/></svg><span class="nm">com.user.apple-reminders-bridge.plist</span><span class="msg">Some enhancements to reminder date logic (<span class="blue">#1</span>)</span><span class="dt">3 weeks ago</span></div>
<div class="h2" style="top:210px;line-height:24px">About</div>
<div class="sb" style="top:250px;font-size:16px;line-height:24px;color:#1f2328">Browser extension to add quick<br>reminders</div>
<div class="li" style="top:314px"><svg class="" style="" width="16" height="16" viewBox="0 0 16 16"><path d="M0 1.75A.75.75 0 0 1 .75 1h4.253c1.227 0 2.317.59 3 1.501A3.743 3.743 0 0 1 11.006 1h4.245a.75.75 0 0 1 .75.75v10.5a.75.75 0 0 1-.75.75h-4.507a2.25 2.25 0 0 0-1.591.659l-.622.621a.75.75 0 0 1-1.06 0l-.622-.621A2.25 2.25 0 0 0 5.258 13H.75a.75.75 0 0 1-.75-.75Zm7.251 10.324.004-5.073-.002-2.253A2.25 2.25 0 0 0 5.003 2.5H1.5v9h3.757a3.75 3.75 0 0 1 1.994.574ZM8.755 4.75l-.004 7.322a3.752 3.752 0 0 1 1.992-.572H14.5v-9h-3.495a2.25 2.25 0 0 0-2.25 2.25Z"/></svg>Readme</div>
<div class="li" style="top:343px"><svg class="" style="" width="16" height="16" viewBox="0 0 16 16"><path d="M8.75.75V2h.985c.304 0 .603.08.867.231l1.29.736c.038.022.08.033.124.033h2.234a.75.75 0 0 1 0 1.5h-.427l2.111 4.692a.75.75 0 0 1-.154.838l-.53-.53.529.531-.001.002-.002.002-.006.006-.006.005-.01.01-.045.04c-.21.176-.441.327-.686.45C14.556 10.78 13.88 11 13 11a4.498 4.498 0 0 1-2.023-.454 3.544 3.544 0 0 1-.686-.45l-.045-.04-.016-.015-.006-.006-.004-.004v-.001a.75.75 0 0 1-.154-.838L12.178 4.5h-.162c-.305 0-.604-.079-.868-.231l-1.29-.736a.245.245 0 0 0-.124-.033H8.75V13h2.5a.75.75 0 0 1 0 1.5h-6.5a.75.75 0 0 1 0-1.5h2.5V3.5h-.984a.245.245 0 0 0-.124.033l-1.289.737c-.265.15-.564.23-.869.23h-.162l2.112 4.692a.75.75 0 0 1-.154.838l-.53-.53.529.531-.001.002-.002.002-.006.006-.016.015-.045.04c-.21.176-.441.327-.686.45C4.556 10.78 3.88 11 3 11a4.498 4.498 0 0 1-2.023-.454 3.544 3.544 0 0 1-.686-.45l-.045-.04-.016-.015-.006-.006-.004-.004v-.001a.75.75 0 0 1-.154-.838L2.178 4.5H1.75a.75.75 0 0 1 0-1.5h2.234a.249.249 0 0 0 .125-.033l1.288-.737c.265-.15.564-.23.869-.23h.984V.75a.75.75 0 0 1 1.5 0Zm2.945 8.477c.285.135.718.273 1.305.273s1.02-.138 1.305-.273L13 6.327Zm-10 0c.285.135.718.273 1.305.273s1.02-.138 1.305-.273L3 6.327Z"/></svg>MIT license</div>
<div class="li" style="top:372px"><svg class="" style="margin-right:11.2px" width="16" height="16" viewBox="0 0 16 16"><path d="M6 2c.306 0 .582.187.696.471L10 10.731l1.304-3.26A.751.751 0 0 1 12 7h3.25a.75.75 0 0 1 0 1.5h-2.742l-1.812 4.528a.751.751 0 0 1-1.392 0L6 4.77 4.696 8.03A.75.75 0 0 1 4 8.5H.75a.75.75 0 0 1 0-1.5h2.742l1.812-4.529A.751.751 0 0 1 6 2Z"/></svg>Activity</div>
<div class="li" style="top:401px"><svg class="" style="" width="16" height="16" viewBox="0 0 16 16"><path d="M8 .25a.75.75 0 0 1 .673.418l1.882 3.815 4.21.612a.75.75 0 0 1 .416 1.279l-3.046 2.97.719 4.192a.751.751 0 0 1-1.088.791L8 12.347l-3.766 1.98a.75.75 0 0 1-1.088-.79l.72-4.194L.818 6.374a.75.75 0 0 1 .416-1.28l4.21-.611L7.327.668A.75.75 0 0 1 8 .25Zm0 2.445L6.615 5.5a.75.75 0 0 1-.564.41l-3.097.45 2.24 2.184a.75.75 0 0 1 .216.664l-.528 3.084 2.769-1.456a.75.75 0 0 1 .698 0l2.77 1.456-.53-3.084a.75.75 0 0 1 .216-.664l2.24-2.183-3.096-.45a.75.75 0 0 1-.564-.41L8 2.694Z"/></svg><b style="color:#59636e;margin-right:4px">0</b>stars</div>
<div class="li" style="top:430px"><svg class="" style="" width="16" height="16" viewBox="0 0 16 16"><path d="M8 2c1.981 0 3.671.992 4.933 2.078 1.27 1.091 2.187 2.345 2.637 3.023a1.62 1.62 0 0 1 0 1.798c-.45.678-1.367 1.932-2.637 3.023C11.67 13.008 9.981 14 8 14c-1.981 0-3.671-.992-4.933-2.078C1.797 10.83.88 9.576.43 8.898a1.62 1.62 0 0 1 0-1.798c.45-.677 1.367-1.931 2.637-3.022C4.33 2.992 6.019 2 8 2ZM1.679 7.932a.12.12 0 0 0 0 .136c.411.622 1.241 1.75 2.366 2.717C5.176 11.758 6.527 12.5 8 12.5c1.473 0 2.825-.742 3.955-1.715 1.124-.967 1.954-2.096 2.366-2.717a.12.12 0 0 0 0-.136c-.412-.621-1.242-1.75-2.366-2.717C10.824 4.242 9.473 3.5 8 3.5c-1.473 0-2.825.742-3.955 1.715-1.124.967-1.954 2.096-2.366 2.717ZM8 10a2 2 0 1 1-.001-3.999A2 2 0 0 1 8 10Z"/></svg><b style="color:#59636e;margin-right:4px">0</b>watching</div>
<div class="li" style="top:459px"><svg class="" style="" width="16" height="16" viewBox="0 0 16 16"><path d="M5 5.372v.878c0 .414.336.75.75.75h4.5a.75.75 0 0 0 .75-.75v-.878a2.25 2.25 0 1 1 1.5 0v.878a2.25 2.25 0 0 1-2.25 2.25h-1.5v2.128a2.251 2.251 0 1 1-1.5 0V8.5h-1.5A2.25 2.25 0 0 1 3.5 6.25v-.878a2.25 2.25 0 1 1 1.5 0ZM5 3.25a.75.75 0 1 0-1.5 0 .75.75 0 0 0 1.5 0Zm6.75.75a.75.75 0 1 0 0-1.5.75.75 0 0 0 0 1.5Zm-3 8.75a.75.75 0 1 0-1.5 0 .75.75 0 0 0 1.5 0Z"/></svg><b style="color:#59636e;margin-right:4px">0</b>forks</div>
<div class="li" style="top:488px">Report repository</div>
<div class="sep" style="top:525px"></div>
<div class="h2" style="top:542px;line-height:24px">Releases</div><span class="cnt" style="left:1346.5px;top:545px;width:21px">1</span>
<svg class="" style="position:absolute;left:1272px;top:586px;color:#1f883d" width="16" height="16" viewBox="0 0 16 16"><path d="M1 7.775V2.75C1 1.784 1.784 1 2.75 1h5.025c.464 0 .91.184 1.238.513l6.25 6.25a1.75 1.75 0 0 1 0 2.474l-5.026 5.026a1.75 1.75 0 0 1-2.474 0l-6.25-6.25A1.752 1.752 0 0 1 1 7.775Zm1.5 0c0 .066.026.13.073.177l6.25 6.25a.25.25 0 0 0 .354 0l5.025-5.025a.25.25 0 0 0 0-.354l-6.25-6.25a.25.25 0 0 0-.177-.073H2.75a.25.25 0 0 0-.25.25ZM6 5a1 1 0 1 1 0 2 1 1 0 0 1 0-2Z"/></svg>
<b class="a" style="left:1296px;top:582px;line-height:20px">Create Reminders v1.0.0</b>
<span class="a" style="left:1467px;top:582px;width:46px;height:21px;border:1px solid #1f883d;border-radius:2em;font-size:12px;line-height:19px;color:#1f883d;text-align:center">Latest</span>
<span class="a" style="left:1296px;top:603px;font-size:12px;line-height:18px;color:#59636e">last week</span>
<div class="sep" style="top:637px"></div>
<div class="h2" style="top:654px;line-height:24px">Packages</div>
<span class="a" style="left:1272px;top:694px;font-size:12px;line-height:18px;color:#59636e">No packages published</span>
<div class="sep" style="top:729px"></div>
<div class="h2" style="top:745px;line-height:24px">Languages</div>
<div class="a" style="left:1272px;top:785px;width:296px;height:8px;border-radius:6px;overflow:hidden;display:flex;background:#d1d9e0">
<span style="width:75.3%;background:#f1e05a;margin-right:2px;"></span>
<span style="width:10.2%;background:#e34c26;margin-right:2px;"></span>
<span style="width:7.6%;background:#663399;margin-right:2px;"></span>
<span style="width:3.7%;background:#3572A5;margin-right:2px;"></span>
<span style="width:3.2%;background:#89e051;"></span>
</div>
<div class="lg" style="left:1276px;top:801px;height:18px"><i style="background:#f1e05a"></i><b>JavaScript</b>75.3%</div>
<div class="lg" style="left:1419px;top:801px;height:18px"><i style="background:#e34c26"></i><b>HTML</b>10.2%</div>
<div class="lg" style="left:1276px;top:824px;height:18px"><i style="background:#663399"></i><b>CSS</b>7.6%</div>
<div class="lg" style="left:1376px;top:824px;height:18px"><i style="background:#3572A5"></i><b>Python</b>3.7%</div>
<div class="lg" style="left:1276px;top:847px;height:18px"><i style="background:#89e051"></i><b>Shell</b>3.2%</div>
</body></html>
